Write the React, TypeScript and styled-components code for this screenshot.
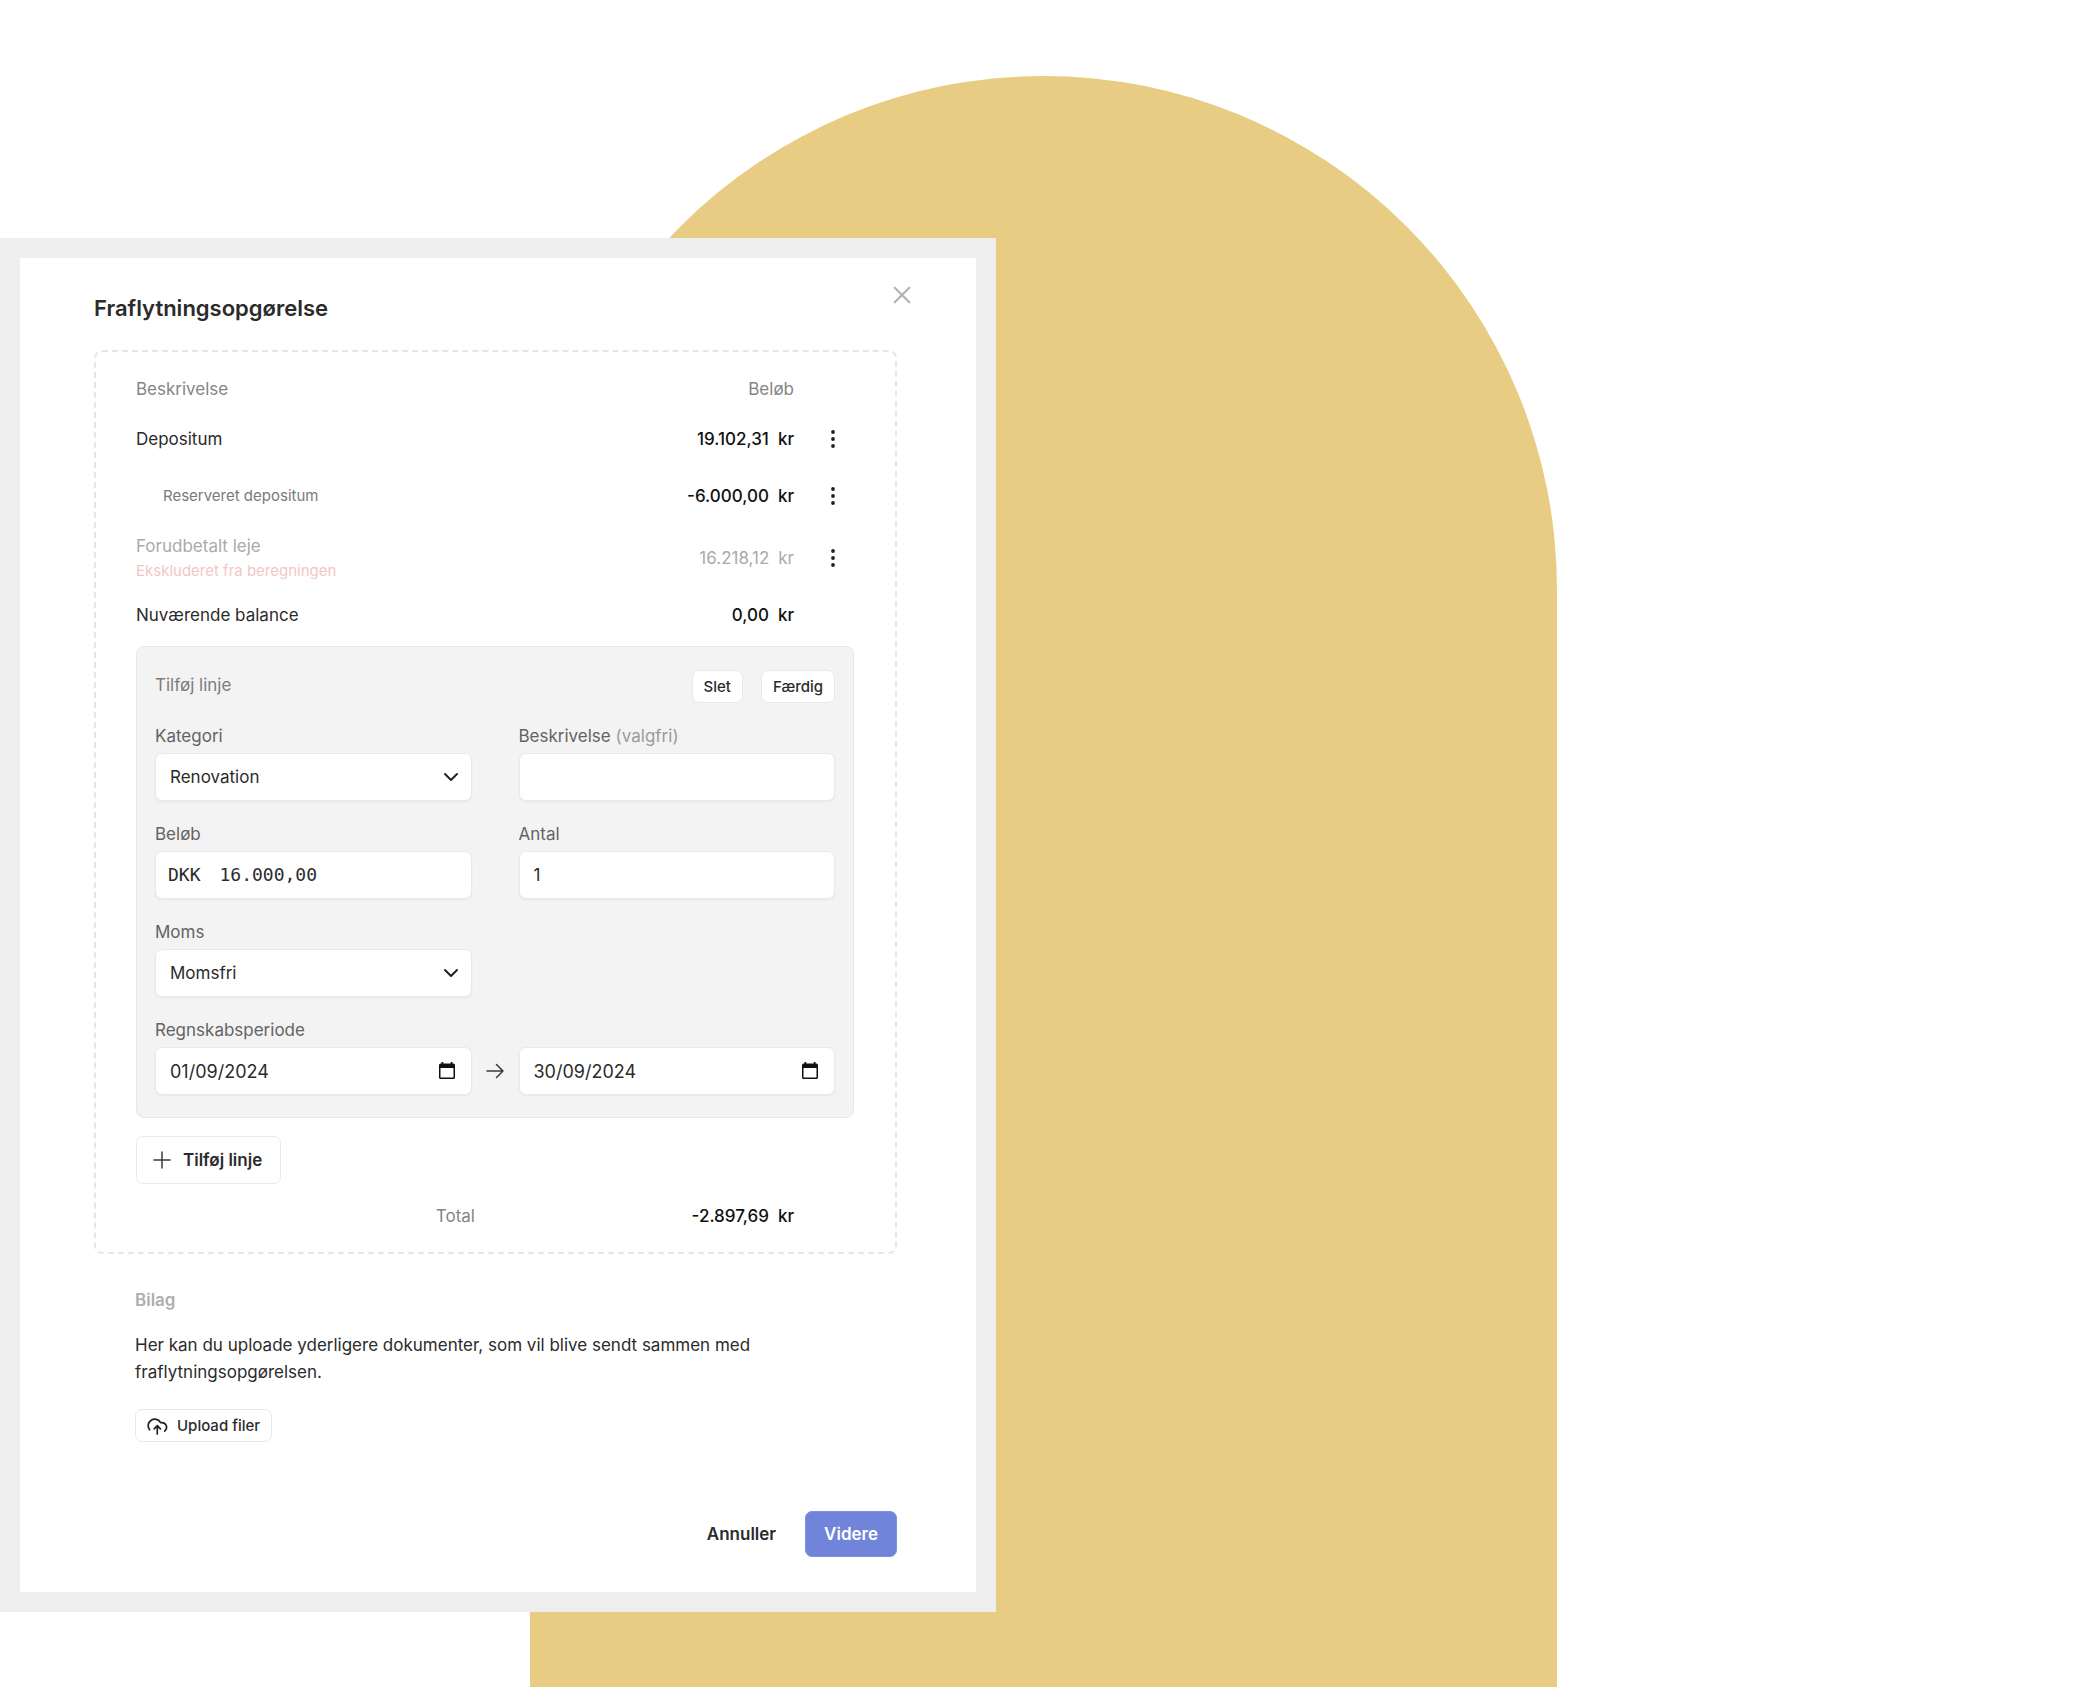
import React from "react";
import styled, { createGlobalStyle } from "styled-components";

const GlobalStyle = createGlobalStyle`
  *, *::before, *::after { box-sizing: border-box; }
  body {
    margin: 0;
    background: #ffffff;
    color: #2b2b2b;
    font-family: Inter, "Liberation Sans", sans-serif;
    font-size: 17px;
    line-height: 26px;
  }
  button, input, select { font: inherit; color: inherit; }
`;

const Stage = styled.main`
  position: relative;
  min-height: 100vh;
  padding: 238px 0 76px;
`;

const Arch = styled.div`
  position: absolute;
  top: 76px;
  right: 516px;
  bottom: 1px;
  left: 530px;
  border-radius: 999px 999px 0 0;
  background: #e8cc84;
`;

const Modal = styled.section`
  position: relative;
  width: 100%;
  max-width: 996px;
  padding: 22px 79px 35px 74px;
  border: 20px solid #eeeeee;
  background: #ffffff;
`;

const ModalHeader = styled.header`
  display: flex;
  justify-content: space-between;
  align-items: flex-start;
  margin-bottom: 28px;
`;

const Title = styled.h1`
  margin: 14px 0 0;
  font-size: 22px;
  line-height: 28px;
  font-weight: 600;
`;

const IconButton = styled.button`
  display: inline-flex;
  align-items: center;
  justify-content: center;
  width: 30px;
  height: 30px;
  padding: 0;
  border: 0;
  background: none;
  cursor: pointer;
`;

const CloseButton = styled(IconButton)`
  margin-right: -20px;
  color: #b4b4b4;
`;

const Statement = styled.div`
  padding: 13px 41px 4px 40px;
  border: 2px dashed #e6e6e6;
  border-radius: 8px;
`;

const Lines = styled.table`
  width: 100%;
  margin-bottom: 5px;
  border-collapse: collapse;
`;

const HeadCell = styled.th<{ $align?: "left" | "right" }>`
  height: 48px;
  padding: 0;
  color: #858585;
  font-weight: 400;
  text-align: ${(p) => p.$align ?? "left"};
`;

const Line = styled.tr<{ $tall?: boolean; $muted?: boolean }>`
  height: ${(p) => (p.$tall ? 62 : 52)}px;
  --label: ${(p) => (p.$muted ? "#aaaaaa" : "#2b2b2b")};
  --amount: ${(p) => (p.$muted ? "#aaaaaa" : "#111111")};
`;

const LabelCell = styled.th<{ $nested?: boolean }>`
  padding: 0 0 0 ${(p) => (p.$nested ? 27 : 0)}px;
  color: ${(p) => (p.$nested ? "#7a7a7a" : "var(--label)")};
  font-size: ${(p) => (p.$nested ? 15 : 17)}px;
  font-weight: 400;
  text-align: left;
`;

const Excluded = styled.div`
  color: #f3c6c8;
  font-size: 15px;
  line-height: 24px;
`;

const AmountCell = styled.td`
  padding: 0;
  color: var(--amount);
  text-align: right;
  white-space: nowrap;
`;

const MenuCell = styled.td`
  width: 60px;
  padding: 0 6px 0 0;
  text-align: right;
  line-height: 0;
`;

const Value = styled.span<{ $strong?: boolean }>`
  display: inline-flex;
  gap: 9px;
  font-weight: ${(p) => (p.$strong ? 500 : 400)};
`;

const Panel = styled.form`
  display: grid;
  gap: 20px;
  padding: 23px 18px 22px;
  border: 1px solid #e8e8e8;
  border-radius: 8px;
  background: #f3f3f3;
`;

const PanelHeader = styled.div`
  display: flex;
  align-items: flex-start;
  justify-content: space-between;
`;

const PanelTitle = styled.h2`
  margin: 0;
  color: #7c7c7c;
  font-size: 17px;
  line-height: 30px;
  font-weight: 400;
`;

const Actions = styled.div`
  display: flex;
  gap: 18px;
`;

const SmallButton = styled.button`
  display: inline-flex;
  align-items: center;
  gap: 9px;
  height: 33px;
  padding: 0 11px;
  border: 1px solid #e9e9e9;
  border-radius: 7px;
  background: #ffffff;
  font-size: 15px;
  font-weight: 500;
  cursor: pointer;
`;

const FieldRow = styled.div`
  display: grid;
  grid-template-columns: minmax(0, 1fr) 47px minmax(0, 1fr);
  align-items: end;
`;

const Field = styled.div<{ $last?: boolean }>`
  display: flex;
  flex-direction: column;
  gap: 4px;
  ${(p) => p.$last && "grid-column: 3;"}
`;

const FieldLabel = styled.label`
  color: #636363;
`;

const Optional = styled.span`
  color: #9a9a9a;
`;

const Control = styled.div`
  display: flex;
  align-items: center;
  position: relative;
  height: 48px;
  border: 1px solid #e9e9e9;
  border-radius: 7px;
  background: #ffffff;
  box-shadow: 0 1px 2px rgba(0, 0, 0, 0.05);
`;

const TextInput = styled.input`
  flex: 1;
  min-width: 0;
  height: 100%;
  padding: 0 14px;
  border: 0;
  border-radius: 7px;
  outline: 0;
  background: none;
`;

const DateInput = styled(TextInput)`
  font-size: 18px;
`;

const Currency = styled.span`
  padding-left: 12px;
  font-family: "DejaVu Sans Mono", "Liberation Mono", monospace;
  font-size: 18px;
`;

const MoneyInput = styled(TextInput)`
  height: 26px;
  padding-left: 19px;
  font-family: "DejaVu Sans Mono", "Liberation Mono", monospace;
  font-size: 18px;
`;

const Select = styled.select`
  width: 100%;
  height: 100%;
  padding: 0 40px 0 14px;
  border: 0;
  border-radius: 7px;
  outline: 0;
  background: none;
  appearance: none;
`;

const Chevron = styled.svg`
  position: absolute;
  right: 12px;
  pointer-events: none;
`;

const PickerButton = styled(IconButton)`
  margin-right: 9px;
  color: #111111;
`;

const ArrowSlot = styled.div`
  display: flex;
  align-items: center;
  justify-content: center;
  height: 48px;
`;

const AddButton = styled.button`
  display: inline-flex;
  align-items: center;
  gap: 12px;
  height: 48px;
  margin-top: 18px;
  padding: 0 18px 0 16px;
  border: 1px solid #e9e9e9;
  border-radius: 7px;
  background: #ffffff;
  font-weight: 600;
  cursor: pointer;
`;

const TotalRow = styled.div`
  display: grid;
  grid-template-columns: minmax(0, 17fr) minmax(0, 16fr) 60px;
  align-items: center;
  height: 64px;
  text-align: right;
  color: #111111;
`;

const TotalLabel = styled.span`
  color: #858585;
`;

const Attachments = styled.section`
  padding: 33px 41px 0;
`;

const AttachmentsTitle = styled.h2`
  margin: 0 0 19px;
  color: #aeaeae;
  font-size: 17px;
  font-weight: 600;
`;

const Note = styled.p`
  margin: 0 0 23px;
  line-height: 27px;
`;

const Footer = styled.footer`
  display: flex;
  justify-content: flex-end;
  gap: 12px;
  margin-top: 69px;
`;

const FooterButton = styled.button<{ $primary?: boolean }>`
  height: 46px;
  padding: 0 ${(p) => (p.$primary ? 18 : 16)}px;
  border: 1px solid ${(p) => (p.$primary ? "#7f90e0" : "transparent")};
  border-radius: 7px;
  background: ${(p) => (p.$primary ? "#7084da" : "transparent")};
  color: ${(p) => (p.$primary ? "#ffffff" : "#2b2b2b")};
  font-weight: 600;
  cursor: pointer;
`;

const CloseIcon = () => (
  <svg width="18" height="18" viewBox="0 0 18 18" fill="none" stroke="currentColor" strokeWidth="2.200" strokeLinecap="round" aria-hidden="true">
    <path d="M1.700 1.700l14.600 14.600M16.300 1.700L1.700 16.300" />
  </svg>
);

const DotsIcon = () => (
  <svg width="18" height="18" viewBox="0 0 18 18" fill="#222222" aria-hidden="true">
    <circle cx="9" cy="2" r="1.9" />
    <circle cx="9" cy="9" r="1.9" />
    <circle cx="9" cy="16" r="1.9" />
  </svg>
);

const ChevronIcon = () => (
  <Chevron width="16" height="10" viewBox="0 0 16 10" fill="none" stroke="#222222" strokeWidth="2" strokeLinecap="round" strokeLinejoin="round" aria-hidden="true">
    <path d="M2 2l6 6 6-6" />
  </Chevron>
);

const CalendarIcon = () => (
  <svg width="16" height="18" viewBox="0 0 16 18" aria-hidden="true">
    <path
      fill="currentColor"
      fillRule="evenodd"
      d="M2.500 0h1.800v1.500h7.400V0h1.800v1.500h.900A1.600 1.600 0 0 1 16 3.100v12.300a1.600 1.600 0 0 1-1.600 1.600H1.600A1.600 1.600 0 0 1 0 15.400V3.100A1.600 1.600 0 0 1 1.600 1.500h.900zM1.500 6v9.500h13V6z"
    />
  </svg>
);

const ArrowIcon = () => (
  <svg width="20" height="16" viewBox="0 0 20 16" fill="none" stroke="#3a3a3a" strokeWidth="1.500" strokeLinecap="round" strokeLinejoin="round" aria-hidden="true">
    <path d="M2 8h16M11.500 1.500L18 8l-6.500 6.500" />
  </svg>
);

const PlusIcon = () => (
  <svg width="18" height="18" viewBox="0 0 18 18" fill="none" stroke="#3a3a3a" strokeWidth="1.500" strokeLinecap="round" aria-hidden="true">
    <path d="M9 1v16M1 9h16" />
  </svg>
);

const UploadIcon = () => (
  <svg width="21" height="18" viewBox="0 0 21 18" fill="none" stroke="#222222" strokeWidth="1.700" strokeLinecap="round" strokeLinejoin="round" aria-hidden="true">
    <path d="M2.600 12.800A6.600 6.600 0 1 1 13.600 5.600h1.200a4.700 4.700 0 0 1 2.800 8.500" />
    <path d="M10.300 17V9.200M7.200 11.800l3.100-3.100 3.100 3.100" />
  </svg>
);

type LineData = {
  label: string;
  amount: string;
  note?: string;
  nested?: boolean;
  muted?: boolean;
  menu?: boolean;
};

const lines: LineData[] = [
  { label: "Depositum", amount: "19.102,31", menu: true },
  { label: "Reserveret depositum", amount: "-6.000,00", nested: true, menu: true },
  { label: "Forudbetalt leje", amount: "16.218,12", note: "Ekskluderet fra beregningen", muted: true, menu: true },
  { label: "Nuværende balance", amount: "0,00" },
];

const Amount = ({ value, strong }: { value: string; strong?: boolean }) => (
  <Value $strong={strong}>
    <span>{value}</span>
    <span>kr</span>
  </Value>
);

export default function App() {
  return (
    <>
      <GlobalStyle />
      <Stage lang="da">
        <Arch />
        <Modal role="dialog" aria-labelledby="title">
          <ModalHeader>
            <Title id="title">Fraflytningsopgørelse</Title>
            <CloseButton type="button" aria-label="Luk">
              <CloseIcon />
            </CloseButton>
          </ModalHeader>

          <Statement>
            <Lines>
              <thead>
                <tr>
                  <HeadCell scope="col">Beskrivelse</HeadCell>
                  <HeadCell scope="col" $align="right">Beløb</HeadCell>
                  <MenuCell />
                </tr>
              </thead>
              <tbody>
                {lines.map((line) => (
                  <Line key={line.label} $tall={line.nested || !!line.note} $muted={line.muted}>
                    <LabelCell scope="row" $nested={line.nested}>
                      {line.label}
                      {line.note && <Excluded>{line.note}</Excluded>}
                    </LabelCell>
                    <AmountCell>
                      <Amount value={line.amount} strong={!line.muted} />
                    </AmountCell>
                    <MenuCell>
                      {line.menu && (
                        <IconButton type="button" aria-label={`Flere valg for ${line.label}`}>
                          <DotsIcon />
                        </IconButton>
                      )}
                    </MenuCell>
                  </Line>
                ))}
              </tbody>
            </Lines>

            <Panel onSubmit={(e) => e.preventDefault()}>
              <PanelHeader>
                <PanelTitle>Tilføj linje</PanelTitle>
                <Actions>
                  <SmallButton type="button">Slet</SmallButton>
                  <SmallButton type="submit">Færdig</SmallButton>
                </Actions>
              </PanelHeader>

              <FieldRow>
                <Field>
                  <FieldLabel htmlFor="category">Kategori</FieldLabel>
                  <Control>
                    <Select id="category" defaultValue="Renovation">
                      <option>Renovation</option>
                    </Select>
                    <ChevronIcon />
                  </Control>
                </Field>
                <Field $last>
                  <FieldLabel htmlFor="description">
                    Beskrivelse <Optional>(valgfri)</Optional>
                  </FieldLabel>
                  <Control>
                    <TextInput id="description" type="text" />
                  </Control>
                </Field>
              </FieldRow>

              <FieldRow>
                <Field>
                  <FieldLabel htmlFor="amount">Beløb</FieldLabel>
                  <Control>
                    <Currency>DKK</Currency>
                    <MoneyInput id="amount" type="text" inputMode="decimal" defaultValue="16.000,00" />
                  </Control>
                </Field>
                <Field $last>
                  <FieldLabel htmlFor="quantity">Antal</FieldLabel>
                  <Control>
                    <TextInput id="quantity" type="text" inputMode="numeric" defaultValue="1" />
                  </Control>
                </Field>
              </FieldRow>

              <FieldRow>
                <Field>
                  <FieldLabel htmlFor="vat">Moms</FieldLabel>
                  <Control>
                    <Select id="vat" defaultValue="Momsfri">
                      <option>Momsfri</option>
                    </Select>
                    <ChevronIcon />
                  </Control>
                </Field>
              </FieldRow>

              <FieldRow>
                <Field>
                  <FieldLabel htmlFor="from">Regnskabsperiode</FieldLabel>
                  <Control>
                    <DateInput id="from" type="text" defaultValue="01/09/2024" />
                    <PickerButton type="button" aria-label="Vælg startdato">
                      <CalendarIcon />
                    </PickerButton>
                  </Control>
                </Field>
                <ArrowSlot>
                  <ArrowIcon />
                </ArrowSlot>
                <Control>
                  <DateInput id="to" type="text" aria-label="Slutdato" defaultValue="30/09/2024" />
                  <PickerButton type="button" aria-label="Vælg slutdato">
                    <CalendarIcon />
                  </PickerButton>
                </Control>
              </FieldRow>
            </Panel>

            <AddButton type="button">
              <PlusIcon />
              Tilføj linje
            </AddButton>

            <TotalRow>
              <TotalLabel>Total</TotalLabel>
              <span>
                <Amount value="-2.897,69" strong />
              </span>
            </TotalRow>
          </Statement>

          <Attachments>
            <AttachmentsTitle>Bilag</AttachmentsTitle>
            <Note>
              Her kan du uploade yderligere dokumenter, som vil blive sendt sammen med fraflytningsopgørelsen.
            </Note>
            <SmallButton type="button">
              <UploadIcon />
              Upload filer
            </SmallButton>
          </Attachments>

          <Footer>
            <FooterButton type="button">Annuller</FooterButton>
            <FooterButton type="button" $primary>
              Videre
            </FooterButton>
          </Footer>
        </Modal>
      </Stage>
    </>
  );
}
